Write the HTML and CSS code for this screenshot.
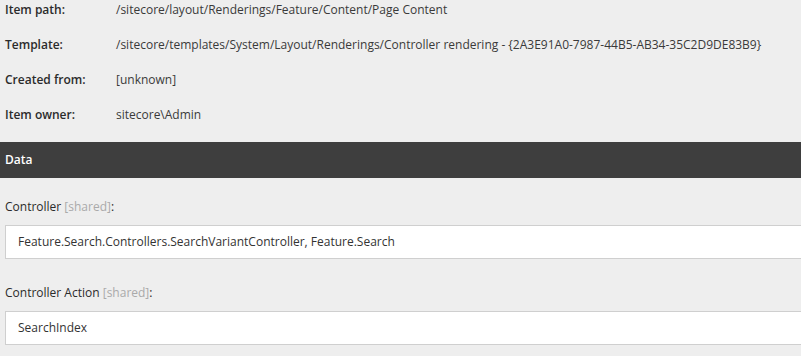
FILE: index.html
```html
<!DOCTYPE html>
<html lang="en">
	<head>
		<meta charset="UTF-8" />
		<meta name="viewport" content="width=device-width, initial-scale=1.0" />
		<title>Item details</title>
		<link rel="stylesheet" href="styles.css">
	</head>
	<body>
		<div class="info">
			<div class="info_row">
				<span class="info_key">Item path:</span>
				<span class="info_val">/sitecore/layout/Renderings/Feature/Content/Page Content</span>
			</div>
			<div class="info_row">
				<span class="info_key">Template:</span>
				<span class="info_val">/sitecore/templates/System/Layout/Renderings/Controller rendering - {2A3E91A0-7987-44B5-AB34-35C2D9DE83B9}</span>
			</div>
			<div class="info_row">
				<span class="info_key">Created from:</span>
				<span class="info_val">[unknown]</span>
			</div>
			<div class="info_row">
				<span class="info_key">Item owner:</span>
				<span class="info_val">sitecore\Admin</span>
			</div>
		</div>
		<div class="section_head">Data</div>
		<div class="fields">
			<div class="field">
				<label class="field_label">Controller <span class="shared">[shared]</span>:</label>
				<div class="field_input">Feature.Search.Controllers.SearchVariantController, Feature.Search</div>
			</div>
			<div class="field">
				<label class="field_label">Controller Action <span class="shared">[shared]</span>:</label>
				<div class="field_input">SearchIndex</div>
			</div>
		</div>
	</body>
</html>
```

FILE: styles.css
```css
* {
	margin: 0;
	padding: 0;
	box-sizing: border-box;
}
body {
	font-family: 'Open Sans', 'Noto Sans', sans-serif;
	font-size: 12px;
	line-height: 18px;
	color: #333;
	background: #eeeeee;
	overflow: hidden;
}

.info {
	display: flex;
	flex-direction: column;
	gap: 17px;
	padding: 1px 0 0 5px;
}
.info_row {
	display: flex;
}
.info_key {
	width: 111px;
	font-weight: 600;
	color: #2b2b2b;
}
.info_val {
	color: #3a3a3a;
}

.section_head {
	margin-top: 18px;
	height: 36px;
	line-height: 36px;
	padding-left: 5px;
	background: #3e3e3e;
	color: #fff;
	font-weight: 600;
}

.fields {
	padding: 20px 0 0 5px;
}
.field {
	margin-bottom: 25px;
	margin-right: -20px;
}
.field_label {
	display: block;
	margin-bottom: 9px;
	color: #2b2b2b;
}
.shared {
	color: #aaa;
}
.field_input {
	height: 34px;
	line-height: 32px;
	padding-left: 12px;
	background: #fff;
	border: 1px solid #cfcfcf;
	color: #333;
}
```
